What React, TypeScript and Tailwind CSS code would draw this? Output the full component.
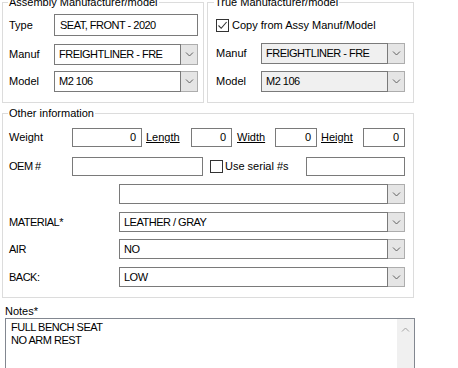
import React from "react";

function Chevron({ up = false, color = "#606060" }: { up?: boolean; color?: string }) {
  return (
    <svg width="9" height="5" viewBox="0 0 9 5" className="block">
      <path d={up ? "M1 4.5 L4.5 1 L8 4.5" : "M1 0.5 L4.5 4 L8 0.5"} fill="none" stroke={color} strokeWidth="1" />
    </svg>
  );
}

function Combo({ value = "", size, disabled = false }: { value?: string; size: string; disabled?: boolean }) {
  return (
    <div className={`flex ${size}`}>
      <div
        className={`flex flex-1 items-center border border-[#7a7a7a] pl-[4px] tracking-[-0.5px] ${
          disabled ? "bg-[#f0f0f0]" : "bg-white"
        }`}
      >
        {value}
      </div>
      <div className="flex w-[17px] items-center justify-center border-y border-r border-[#adadad] bg-[#e5e5e5]">
        <Chevron />
      </div>
    </div>
  );
}

function NumBox({ size }: { size: string }) {
  return (
    <div className={`flex items-center justify-end border border-[#7a7a7a] bg-white pr-[5px] ${size}`}>0</div>
  );
}

function CheckBox({ checked = false }: { checked?: boolean }) {
  return (
    <div className="flex h-[13px] w-[13px] shrink-0 items-center justify-center border border-[#333333] bg-white">
      {checked && (
        <svg width="11" height="11" viewBox="0 0 11 11" className="block">
          <path d="M1.5 5.5 L4.2 8.3 L9.6 2" fill="none" stroke="#333333" strokeWidth="1.1" />
        </svg>
      )}
    </div>
  );
}

export default function App() {
  return (
    <div className="h-[368px] w-[458px] overflow-hidden bg-white px-[2px] font-['Liberation_Sans',Arial,sans-serif] text-[11px] leading-[13px] text-black">
      {/* top group boxes */}
      <div className="-mt-[4px] flex gap-[3px]">
        <fieldset className="h-[107px] w-[202px] border border-[#dcdcdc] pl-[6px]">
          <legend className="-ml-[1px] px-[1px] leading-[13px]">Assembly Manufacturer/model</legend>
          <div className="mt-[5px] flex h-[22px] items-center">
            <span className="w-[45px]">Type</span>
            <div className="flex h-[22px] w-[144px] items-center border border-[#7a7a7a] pl-[5px] tracking-[-0.5px]">
              SEAT, FRONT - 2020
            </div>
          </div>
          <div className="mt-[8px] flex items-center">
            <span className="w-[45px]">Manuf</span>
            <Combo value="FREIGHTLINER - FRE" size="h-[21px] w-[144px]" />
          </div>
          <div className="mt-[6px] flex items-center">
            <span className="w-[45px]">Model</span>
            <Combo value="M2 106" size="h-[21px] w-[144px]" />
          </div>
        </fieldset>

        <fieldset className="h-[107px] w-[207px] border border-[#dcdcdc] pl-[8px]">
          <legend className="-ml-[2px] px-[1px] leading-[13px]">True Manufacturer/model</legend>
          <div className="mt-[10px] flex h-[13px] items-center gap-[3px]">
            <CheckBox checked />
            <span>Copy from Assy Manuf/Model</span>
          </div>
          <div className="mt-[11px] flex items-center">
            <span className="w-[45px]">Manuf</span>
            <Combo value="FREIGHTLINER - FRE" size="h-[21px] w-[144px]" disabled />
          </div>
          <div className="mt-[7px] flex items-center">
            <span className="w-[45px]">Model</span>
            <Combo value="M2 106" size="h-[21px] w-[144px]" disabled />
          </div>
        </fieldset>
      </div>

      {/* other information */}
      <fieldset className="mt-[4px] h-[191px] w-[412px] border border-[#dcdcdc] pl-[6px]">
        <legend className="-ml-[1px] px-[1px] leading-[13px]">Other information</legend>

        <div className="mt-[8px] flex h-[19px] items-center">
          <span className="w-[63px]">Weight</span>
          <NumBox size="h-[19px] w-[70px]" />
          <span className="ml-[4px] w-[45px] underline">Length</span>
          <NumBox size="h-[19px] w-[41px]" />
          <span className="ml-[5px] w-[38px] underline">Width</span>
          <NumBox size="h-[19px] w-[42px]" />
          <span className="ml-[4px] w-[42px] underline">Height</span>
          <NumBox size="h-[19px] w-[42px]" />
        </div>

        <div className="mt-[10px] flex h-[19px] items-center">
          <span className="w-[63px] tracking-[-0.5px]">OEM #</span>
          <div className="h-[19px] w-[131px] border border-[#7a7a7a] bg-white" />
          <div className="ml-[7px] flex w-[96px] items-center gap-[2px]">
            <CheckBox />
            <span>Use serial #s</span>
          </div>
          <div className="h-[19px] w-[99px] border border-[#7a7a7a] bg-white" />
        </div>

        <div className="mt-[8px] flex items-center">
          <span className="w-[110px]" />
          <Combo size="h-[20px] w-[286px]" />
        </div>
        <div className="mt-[8px] flex items-center">
          <span className="w-[110px] tracking-[-0.5px]">MATERIAL*</span>
          <Combo value="LEATHER / GRAY" size="h-[20px] w-[286px]" />
        </div>
        <div className="mt-[7px] flex items-center">
          <span className="w-[110px] tracking-[-0.5px]">AIR</span>
          <Combo value="NO" size="h-[20px] w-[286px]" />
        </div>
        <div className="mt-[8px] flex items-center">
          <span className="w-[110px] tracking-[-0.5px]">BACK:</span>
          <Combo value="LOW" size="h-[20px] w-[286px]" />
        </div>
      </fieldset>

      {/* notes */}
      <div className="mt-[7px] pl-[3px]">Notes*</div>
      <div className="ml-[3px] flex h-[60px] w-[410px] border border-[#828790] bg-white">
        <div className="flex-1 pl-[5px] pt-[2px] tracking-[-0.5px]">
          <div>FULL BENCH SEAT</div>
          <div>NO ARM REST</div>
        </div>
        <div className="flex w-[17px] justify-center bg-[#f0f0f0] pt-[8px]">
          <Chevron up color="#a3a3a3" />
        </div>
      </div>
    </div>
  );
}
